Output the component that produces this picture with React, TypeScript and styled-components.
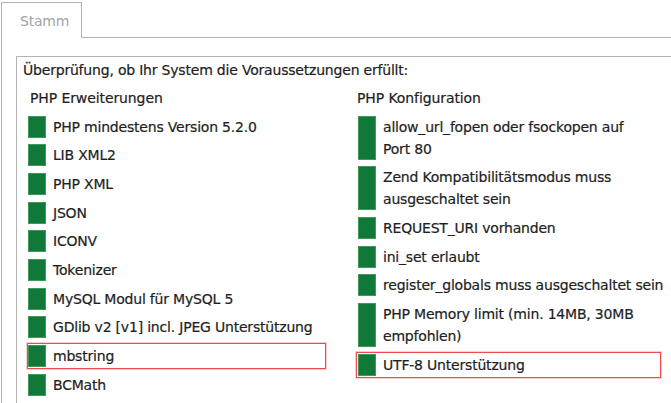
import React from "react";
import styled, { createGlobalStyle } from "styled-components";

const Global = createGlobalStyle`
  html, body { margin: 0; padding: 0; background: #ffffff; }
  body {
    font-family: "DejaVu Sans", Verdana, sans-serif;
    font-size: 14px;
    color: #221e1e;
    overflow: hidden;
  }
`;

const Page = styled.div`
  width: 671px;
  height: 403px;
  overflow: hidden;
  background: #fff;
`;

const TabBar = styled.div`
  display: flex;
  align-items: flex-end;
  height: 38px;
`;

const Tab = styled.div`
  margin-left: 1px;
  box-sizing: border-box;
  width: 81px;
  height: 36px;
  border: 1px solid #b3b3b3;
  border-bottom: none;
  background: #fff;
  color: #a3a3a8;
  font-size: 14px;
  letter-spacing: -0.2px;
  display: flex;
  align-items: center;
  padding-left: 18px;
`;

const TabFill = styled.div`
  flex: 1;
  border-bottom: 1px solid #b3b3b3;
`;

const Panel = styled.div`
  margin-left: 1px;
  border-left: 1px solid #b3b3b3;
  padding: 18px 0 0 14px;
  height: 400px;
`;

const Box = styled.div`
  border-top: 1px solid #b3b3b3;
  border-left: 1px solid #b3b3b3;
  padding: 2px 0 0 6px;
  height: 400px;
`;

const Intro = styled.div`
  line-height: 22px;
  letter-spacing: -0.2px;
  white-space: nowrap;
  -webkit-text-stroke: 0.2px currentColor;
`;

const Columns = styled.div`
  display: grid;
  grid-template-columns: 299px 305px;
  column-gap: 30px;
  padding-left: 4px;
  margin-top: 6px;
`;

const Column = styled.div`
  display: flex;
  flex-direction: column;
  gap: 2.67px;
`;

const ColTitle = styled.div<{ $indent: number }>`
  line-height: 22px;
  padding-left: ${(p) => p.$indent}px;
  margin-bottom: 2px;
  letter-spacing: -0.1px;
  white-space: nowrap;
  -webkit-text-stroke: 0.2px currentColor;
`;

const Row = styled.div<{ $alert?: boolean; $pad: number }>`
  display: flex;
  align-items: stretch;
  padding: 1px 0 1px ${(p) => p.$pad}px;
  border: 1px solid ${(p) => (p.$alert ? "#ef4a50" : "transparent")};
  box-shadow: ${(p) => (p.$alert ? "0 0 0 1px rgba(239, 74, 80, 0.28)" : "none")};
`;

const Status = styled.span`
  flex: 0 0 auto;
  width: 18px;
  box-sizing: border-box;
  background: #10793a;
  border: 1px solid #3f9a5a;
  margin-right: 7px;
`;

const Label = styled.span`
  line-height: 22px;
  white-space: nowrap;
  letter-spacing: -0.2px;
  -webkit-text-stroke: 0.2px currentColor;
`;

type Item = { lines: string[]; alert?: boolean };

const extensions: Item[] = [
  { lines: ["PHP mindestens Version 5.2.0"] },
  { lines: ["LIB XML2"] },
  { lines: ["PHP XML"] },
  { lines: ["JSON"] },
  { lines: ["ICONV"] },
  { lines: ["Tokenizer"] },
  { lines: ["MySQL Modul für MySQL 5"] },
  { lines: ["GDlib v2 [v1] incl. JPEG Unterstützung"] },
  { lines: ["mbstring"], alert: true },
  { lines: ["BCMath"] },
];

const config: Item[] = [
  { lines: ["allow_url_fopen oder fsockopen auf", "Port 80"] },
  { lines: ["Zend Kompatibilitätsmodus muss", "ausgeschaltet sein"] },
  { lines: ["REQUEST_URI vorhanden"] },
  { lines: ["ini_set erlaubt"] },
  { lines: ["register_globals muss ausgeschaltet sein"] },
  { lines: ["PHP Memory limit (min. 14MB, 30MB", "empfohlen)"] },
  { lines: ["UTF-8 Unterstützung"], alert: true },
];

function CheckList({ items, pad }: { items: Item[]; pad: number }) {
  return (
    <>
      {items.map((it, i) => (
        <Row key={i} $alert={it.alert} $pad={pad}>
          <Status />
          <Label>
            {it.lines.map((l, j) => (
              <React.Fragment key={j}>
                {j > 0 && <br />}
                {l}
              </React.Fragment>
            ))}
          </Label>
        </Row>
      ))}
    </>
  );
}

export default function App() {
  return (
    <Page>
      <Global />
      <TabBar>
        <Tab>Stamm</Tab>
        <TabFill />
      </TabBar>
      <Panel>
        <Box>
          <Intro>Überprüfung, ob Ihr System die Voraussetzungen erfüllt:</Intro>
          <Columns>
            <Column>
              <ColTitle $indent={3}>PHP Erweiterungen</ColTitle>
              <CheckList items={extensions} pad={0} />
            </Column>
            <Column>
              <ColTitle $indent={1}>PHP Konfiguration</ColTitle>
              <CheckList items={config} pad={1} />
            </Column>
          </Columns>
        </Box>
      </Panel>
    </Page>
  );
}
